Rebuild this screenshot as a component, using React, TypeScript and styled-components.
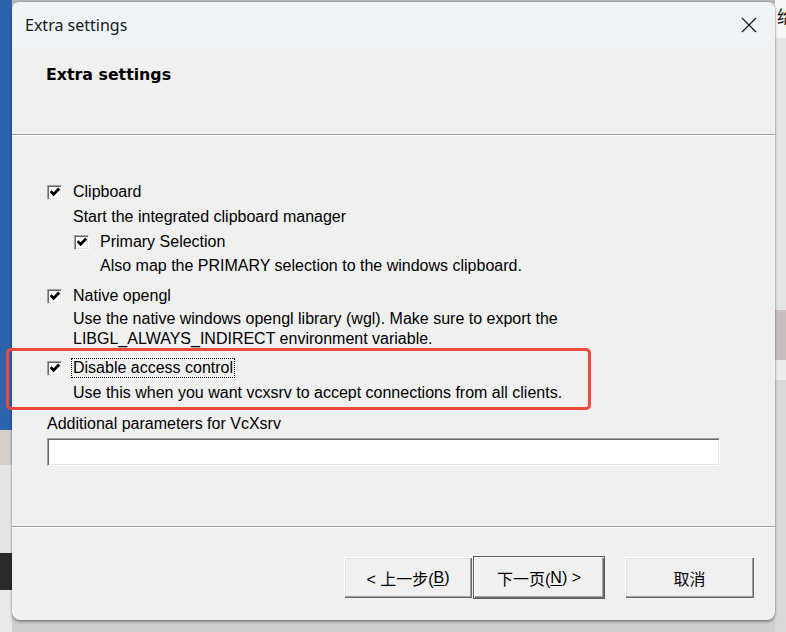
import React from 'react'
import styled, { createGlobalStyle } from 'styled-components'

const GlobalStyle = createGlobalStyle`
  html, body {
    margin: 0;
    padding: 0;
  }
  body {
    width: 786px;
    height: 632px;
    overflow: hidden;
    font-family: 'Liberation Sans', Arial, 'Noto Sans CJK SC', sans-serif;
  }
`

const Desktop = styled.div`
  position: relative;
  width: 786px;
  height: 632px;
  box-sizing: border-box;
  padding: 2px 11px 0 12px;
  background:
    linear-gradient(180deg, #2d63ad 0, #2d63ad 430px, #d6ccc8 430px, #d6ccc8 465px, #e4e4e4 465px, #e4e4e4 553px, #2b2b2b 553px, #2b2b2b 590px, #e9e9e9 590px) left top / 12px 100% no-repeat,
    linear-gradient(180deg, #f6f6f6 0, #f6f6f6 38px, #e4e4e4 38px, #e4e4e4 310px, #c9c0bd 310px, #c9c0bd 360px, #ececec 360px, #ececec 380px, #d9d9d9 380px) right top / 11px 100% no-repeat,
    linear-gradient(180deg, #b4b4b4 0, #b4b4b4 3px, #cfcfcf 3px) left top / 100% 100% no-repeat;
`

const EdgeGlyph = styled.span`
  position: absolute;
  right: -8px;
  top: 3px;
  font-family: 'Noto Sans CJK SC', sans-serif;
  font-size: 17px;
  color: #111;
`

const Dialog = styled.div`
  position: relative;
  width: 763px;
  height: 618px;
  background: #f0f0f0;
  border-radius: 8px;
  box-shadow: 0 2px 3px rgba(0, 0, 0, 0.35), 0 0 0 1px rgba(0, 0, 0, 0.08);
  display: flex;
  flex-direction: column;
  font-size: 16px;
  color: #000;
`

const TitleBar = styled.div`
  height: 45px;
  flex: none;
  display: flex;
  align-items: center;
  justify-content: space-between;
  padding-left: 13px;
  background: #eef3f8;
  border-radius: 8px 8px 0 0;
  font-family: 'Noto Sans', 'Open Sans', sans-serif;
  font-size: 16px;
  color: #1a1a1a;
`

const CloseButton = styled.div`
  width: 48px;
  height: 45px;
  margin-right: 2px;
  display: flex;
  align-items: center;
  justify-content: center;
`

const Header = styled.div`
  height: 87px;
  flex: none;
  box-sizing: border-box;
  padding: 18px 0 0 34px;
  font-family: 'DejaVu Sans', Tahoma, sans-serif;
  font-weight: bold;
  font-size: 15.8px;
  line-height: 20px;
`

const Rule = styled.div`
  height: 0;
  flex: none;
  border-top: 1px solid #a0a0a0;
  border-bottom: 1px solid #ffffff;
`

const Body = styled.div`
  flex: 1;
  padding: 46px 0 0 35px;
`

const Group = styled.div<{ $top?: number; $indent?: number }>`
  position: relative;
  margin-top: ${p => p.$top ?? 0}px;
  padding-left: ${p => p.$indent ?? 0}px;
`

const CheckRow = styled.div`
  display: flex;
  align-items: center;
  height: 20px;
  gap: 10px;
`

const Box = styled.span`
  width: 13px;
  height: 13px;
  flex: none;
  display: flex;
  align-items: center;
  justify-content: center;
  background: #fff;
  border-top: 1px solid #a0a0a0;
  border-left: 1px solid #a0a0a0;
  border-right: 1px solid #ffffff;
  border-bottom: 1px solid #ffffff;
  box-shadow: inset 1px 1px 0 #696969, inset -1px -1px 0 #e3e3e3;
`

const Label = styled.span<{ $focus?: boolean }>`
  line-height: 18px;
  padding: 0 1px;
  margin-left: -1px;
  border: 1px dotted ${p => (p.$focus ? '#000' : 'transparent')};
`

const Desc = styled.div<{ $top?: number }>`
  margin-top: ${p => p.$top ?? 5}px;
  padding-left: 26px;
  line-height: 20px;
  color: #000;
`

const Highlight = styled.div`
  position: absolute;
  left: -41px;
  top: -10px;
  width: 579px;
  height: 56px;
  border: 3px solid #ec4a3f;
  border-radius: 5px;
  pointer-events: none;
`

const FieldLabel = styled.div`
  margin-top: 11px;
  line-height: 20px;
`

const TextInput = styled.div`
  margin-top: 4px;
  width: 673px;
  height: 28px;
  box-sizing: border-box;
  background: #fff;
  border-top: 1px solid #a0a0a0;
  border-left: 1px solid #a0a0a0;
  border-right: 1px solid #fff;
  border-bottom: 1px solid #fff;
  box-shadow: inset 1px 1px 0 #696969, inset -1px -1px 0 #e3e3e3;
`

const Footer = styled.div`
  flex: none;
  height: 92px;
  box-sizing: border-box;
  padding: 28px 20px 0 0;
  display: flex;
  justify-content: flex-end;
  align-items: flex-start;
`

const Button = styled.div<{ $width: number; $default?: boolean; $gap?: number }>`
  width: ${p => p.$width}px;
  height: 43px;
  box-sizing: border-box;
  margin-left: ${p => p.$gap ?? 0}px;
  display: flex;
  align-items: center;
  justify-content: center;
  background: #f0f0f0;
  font-family: 'Liberation Sans', 'Noto Sans CJK SC', sans-serif;
  font-size: 16px;
  border: 1px solid ${p => (p.$default ? '#5a5a5a' : 'transparent')};
  box-shadow: ${p =>
    p.$default
      ? 'inset 1px 1px 0 #fff, inset -1px -1px 0 #696969, inset -2px -2px 0 #a0a0a0'
      : 'inset 1px 1px 0 #fff, inset -1px -1px 0 #696969, inset -2px -2px 0 #a0a0a0, inset 2px 2px 0 #e3e3e3'};
  u {
    text-decoration: underline;
    text-underline-offset: 2px;
  }
`

const Check = () => (
  <svg width="10" height="10" viewBox="0 0 10 10">
    <path d="M0.6 4.2 L3.6 7.2 L9.2 1.6" fill="none" stroke="#000" strokeWidth="2.8" />
  </svg>
)

export default function App() {
  return (
    <>
      <GlobalStyle />
      <Desktop>
        <EdgeGlyph>给</EdgeGlyph>
        <Dialog>
          <TitleBar>
            <span>Extra settings</span>
            <CloseButton>
              <svg width="16" height="16" viewBox="0 0 16 16">
                <path d="M1 1 L15 15 M15 1 L1 15" stroke="#1a1a1a" strokeWidth="1.2" />
              </svg>
            </CloseButton>
          </TitleBar>

          <Header>Extra settings</Header>
          <Rule />

          <Body>
            <Group>
              <CheckRow>
                <Box><Check /></Box>
                <Label>Clipboard</Label>
              </CheckRow>
              <Desc>Start the integrated clipboard manager</Desc>
              <Group $top={5} $indent={27}>
                <CheckRow>
                  <Box><Check /></Box>
                  <Label>Primary Selection</Label>
                </CheckRow>
                <Desc $top={4}>Also map the PRIMARY selection to the windows clipboard.</Desc>
              </Group>
            </Group>

            <Group $top={10}>
              <CheckRow>
                <Box><Check /></Box>
                <Label>Native opengl</Label>
              </CheckRow>
              <Desc $top={3}>
                Use the native windows opengl library (wgl). Make sure to export the
                <br />
                LIBGL_ALWAYS_INDIRECT environment variable.
              </Desc>
            </Group>

            <Group $top={9}>
              <Highlight />
              <CheckRow>
                <Box><Check /></Box>
                <Label $focus>Disable access control</Label>
              </CheckRow>
              <Desc>Use this when you want vcxsrv to accept connections from all clients.</Desc>
            </Group>

            <FieldLabel>Additional parameters for VcXsrv</FieldLabel>
            <TextInput />
          </Body>

          <Rule />
          <Footer>
            <Button $width={130}>
              &lt; 上一步(<u>B</u>)
            </Button>
            <Button $width={132} $default>
              下一页(<u>N</u>) &gt;
            </Button>
            <Button $width={131} $gap={19}>
              取消
            </Button>
          </Footer>
        </Dialog>
      </Desktop>
    </>
  )
}
